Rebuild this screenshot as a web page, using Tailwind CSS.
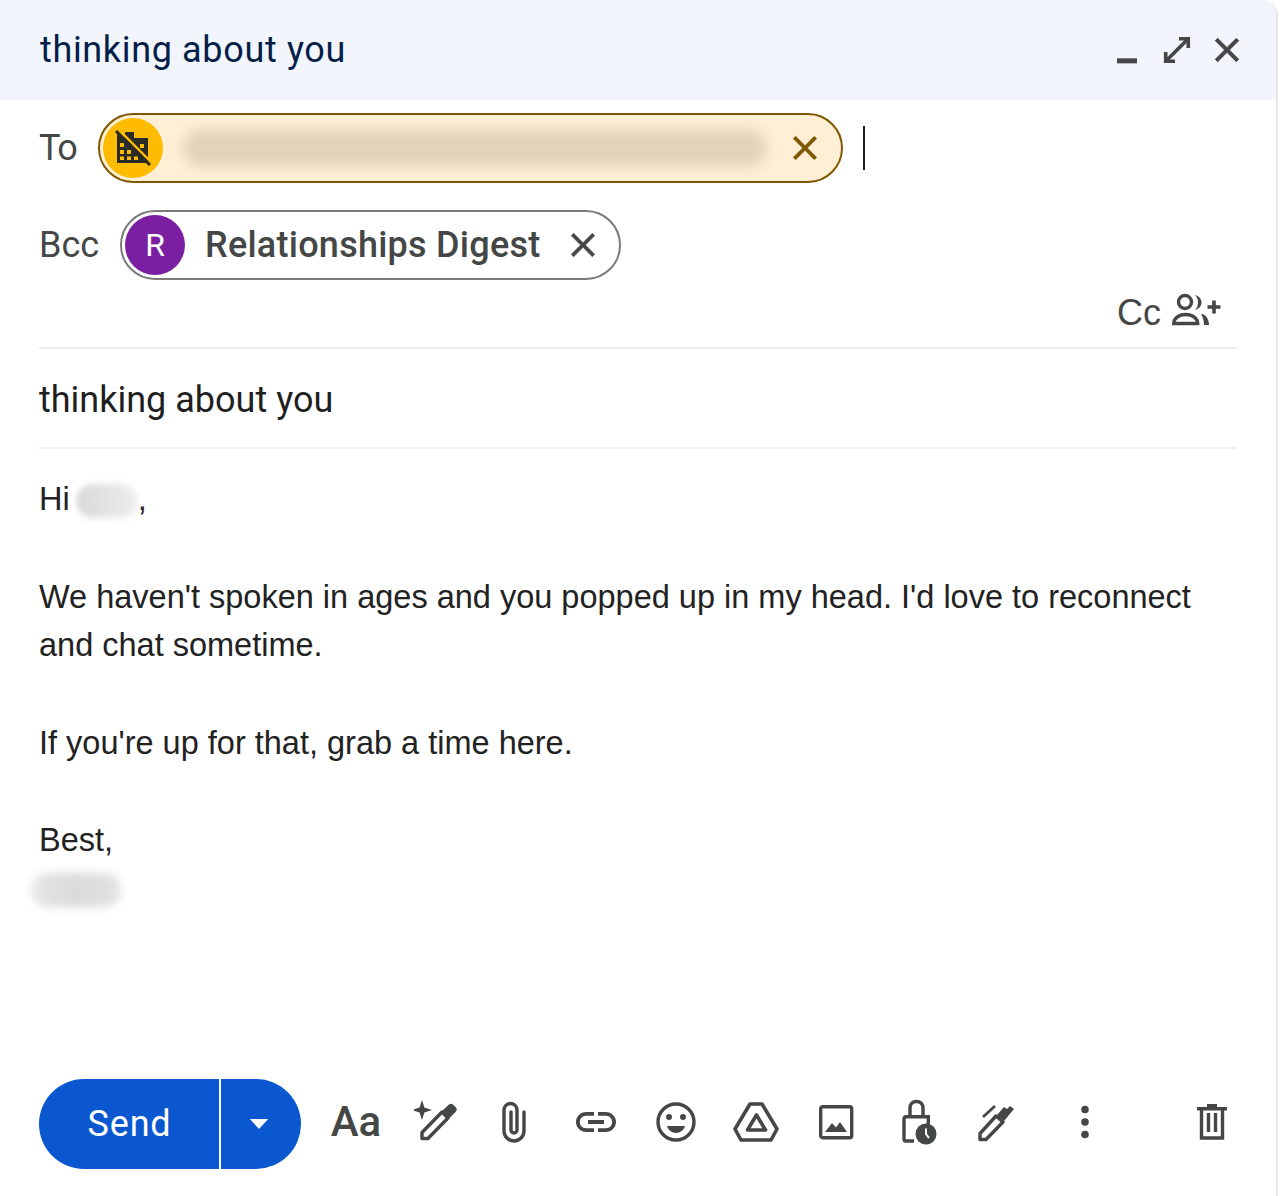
<!DOCTYPE html>
<html lang="en">
<head>
<meta charset="UTF-8">
<title>Compose - thinking about you</title>
<script src="https://cdn.jsdelivr.net/npm/@tailwindcss/browser@4"></script>
</head>
<body class="bg-white">
<div class="h-[1196px] w-[1278px] flex flex-col border-r-2 border-[#e8e8e8] overflow-hidden font-['Roboto',sans-serif] rounded-tr-[16px]">
  <!-- Title bar -->
  <header class="h-[100px] shrink-0 bg-[#f2f6fc] flex items-center pl-[40px] pr-[29px]">
    <h1 class="text-[36px] leading-none tracking-[0.65px] text-[#041e49] font-normal">thinking about you</h1>
    <div class="ml-auto flex items-center gap-[10px] text-[#444746]">
      <svg class="w-[40px] h-[40px]" viewBox="0 0 24 24" fill="currentColor"><rect x="6" y="17" width="12" height="3"/></svg>
      <svg class="w-[40px] h-[40px]" viewBox="0 0 40 40" fill="none" stroke="currentColor" stroke-width="3.6"><path d="M22 8.700h9.300V18M31 9L9 31M8.700 22v9.300H18"/></svg>
      <svg class="w-[40px] h-[40px]" viewBox="0 0 24 24" fill="currentColor" stroke="currentColor" stroke-width=".6"><path d="M19 6.410L17.590 5 12 10.590 6.410 5 5 6.410 10.590 12 5 17.590 6.410 19 12 13.410 17.590 19 19 17.590 13.410 12z"/></svg>
    </div>
  </header>

  <div class="pl-[39px] pr-[39px] flex flex-col flex-1 min-h-0">
    <!-- To -->
    <div class="flex items-center h-[70px] mt-[13px]">
      <span class="text-[36px] text-[#444746] w-[59px] leading-none tracking-[-1.5px]">To</span>
      <div class="w-[745px] h-[70px] rounded-full border-2 border-[#7f5700] bg-[#ffefd5] flex items-center pl-[3px] pr-[16px] overflow-hidden">
        <div class="w-[60px] h-[60px] rounded-full bg-[#ffbb00] flex items-center justify-center shrink-0">
          <svg class="w-[36px] h-[36px]" viewBox="0 0 36 36"><path d="M2 4v29h31V8H19V2h-9v6z" fill="#2b2b26"/><path d="M5 13h4v4H5zM5 20h4v4H5zM5 26.500h4v3.500H5zM12 20h4v4h-4zM12 26.500h4v3.500h-4zM19 26.500h4v3.500h-4zM25 14h4v4h-4z" fill="#ffbb00"/><path d="M3 -1L37 33" stroke="#ffbb00" stroke-width="2.500"/><path d="M1 1l34 34" stroke="#2b2b26" stroke-width="3"/></svg>
        </div>
        <div class="ml-[20px] w-[584px] h-[38px] rounded-full bg-[#e3d3b9] blur-[6px]"></div>
        <svg class="ml-auto w-[40px] h-[40px] shrink-0" viewBox="0 0 24 24" fill="#7f5700" stroke="#7f5700" stroke-width=".4"><path d="M19 6.410L17.590 5 12 10.590 6.410 5 5 6.410 10.590 12 5 17.590 6.410 19 12 13.410 17.590 19 19 17.590 13.410 12z"/></svg>
      </div>
      <div class="ml-[20px] w-[2px] h-[44px] bg-[#1f1f1f]"></div>
    </div>
    <!-- Bcc -->
    <div class="flex items-center h-[70px] mt-[27px]">
      <span class="text-[36px] text-[#444746] w-[81px] leading-none">Bcc</span>
      <div class="w-[501px] h-[70px] rounded-full border-2 border-[#7b7b7b] flex items-center pl-[3px] pr-[16px]">
        <div class="w-[60px] h-[60px] rounded-full bg-[#7b1fa2] text-white text-[32px] flex items-center justify-center shrink-0">R</div>
        <span class="ml-[20px] text-[36px] leading-none font-medium tracking-[0.25px] text-[#444746]">Relationships Digest</span>
        <svg class="ml-auto w-[40px] h-[40px] shrink-0" viewBox="0 0 24 24" fill="#444746" stroke="#444746" stroke-width=".4"><path d="M19 6.410L17.590 5 12 10.590 6.410 5 5 6.410 10.590 12 5 17.590 6.410 19 12 13.410 17.590 19 19 17.590 13.410 12z"/></svg>
      </div>
    </div>
    <!-- Cc -->
    <div class="flex items-center justify-end h-[50px] mt-[8px] pr-[14px] gap-[10px] text-[#444746]">
      <span class="text-[36px] leading-none font-['Liberation_Sans',sans-serif]">Cc</span>
      <svg class="w-[52px] h-[40px]" viewBox="0 0 52 40" fill="none"><circle cx="14" cy="9" r="6.500" stroke="currentColor" stroke-width="3.400"/><path d="M24 2c4 1 6.500 4 6.500 7.500S28 16 24 17c2-2 3-4.500 3-7.500S26 4 24 2z" fill="currentColor"/><path d="M2.700 30.500c0-5 5-9 12-9s12 4 12 9z" stroke="currentColor" stroke-width="3.400"/><path d="M31 21c4 1 7 5 7 11h-5c0-4-1-8-3-11z" fill="currentColor"/><path d="M43 7.500v13M36.500 14h13" stroke="currentColor" stroke-width="3.600"/></svg>
    </div>
    <div class="h-[2px] bg-[#eeeeee] mt-[9px]"></div>
    <!-- Subject -->
    <div class="h-[98px] pt-[4px] flex items-center text-[36px] leading-none text-[#1f1f1f]">thinking about you</div>
    <div class="h-[2px] bg-[#eeeeee]"></div>
    <!-- Body -->
    <div class="mt-[26px] font-['Liberation_Sans',sans-serif] text-[32.5px] leading-[48.75px] text-[#222222]">
      <p>Hi <span class="inline-block align-middle w-[62px] h-[34px] rounded-full bg-linear-to-r from-[#d8d8d8] to-[#eeeeee] blur-[3px] -ml-[3px]"></span>,</p>
      <p class="mt-[48.75px]">We haven't spoken in ages and you popped up in my head. I'd love to reconnect<br>and chat sometime.</p>
      <p class="mt-[48.75px]">If you're up for that, grab a time here.</p>
      <p class="mt-[48.75px]">Best,</p>
      <div class="w-[90px] h-[34px] mt-[8px] -ml-[8px] rounded-full bg-linear-to-r from-[#e6e6e6] via-[#dadada] to-[#e2e2e2] blur-[4px]"></div>
    </div>
    <!-- Toolbar -->
    <footer class="mt-auto mb-[27px] flex items-center text-[#444746]">
      <div class="flex h-[90px] text-white shrink-0">
        <button class="w-[180px] h-[90px] rounded-l-full bg-[#0b57d0] text-[36px] font-normal tracking-[0.8px] pl-[1px]">Send</button>
        <button class="w-[80px] h-[90px] ml-[2px] rounded-r-full bg-[#0b57d0] flex items-center justify-center pr-[4px]">
          <svg class="w-[20px] h-[12px]" viewBox="0 0 24 14" fill="white"><path d="M1 1h22L12 13z"/></svg>
        </button>
      </div>
      <div class="ml-[15px] -mt-[4px] flex items-center">
        <span class="w-[80px] text-center text-[42px] leading-none font-medium">Aa</span>
        <div class="w-[80px] flex justify-center"><svg class="w-[44px] h-[44px]" viewBox="0 0 44 44" fill="none"><path d="M8 0l2.400 7.600L18 10l-7.600 2.400L8 20l-2.400-7.600L-2 10l7.600-2.400z" fill="currentColor"/><path d="M8 32.500L28 12l6 6-20 20.500H8z" stroke="currentColor" stroke-width="3.400" stroke-linejoin="round"/><path d="M28 11l7-6.500c1-1 3-1 4 0l3 3c1 1 1 3 0 4l-7 7z" fill="currentColor"/></svg></div>
        <div class="w-[80px] flex justify-center -ml-[2px]"><svg class="w-[26px] h-[42px]" viewBox="0 0 26 42" fill="none" stroke="currentColor" stroke-width="3.400" stroke-linecap="round"><path d="M23 11v19a10 10 0 0 1-20 0V9a6.500 6.500 0 0 1 13 0v20a3 3 0 0 1-6 0V11"/></svg></div>
        <div class="w-[80px] flex justify-center ml-[2px]"><svg class="w-[48px] h-[48px]" viewBox="0 0 24 24" fill="currentColor"><path d="M3.900 12c0-1.710 1.390-3.100 3.100-3.100h4V7H7c-2.760 0-5 2.240-5 5s2.240 5 5 5h4v-1.900H7c-1.710 0-3.100-1.390-3.100-3.100zM8 13h8v-2H8v2zm9-6h-4v1.900h4c1.710 0 3.100 1.390 3.100 3.100s-1.390 3.100-3.100 3.100h-4V17h4c2.760 0 5-2.240 5-5s-2.240-5-5-5z"/></svg></div>
        <div class="w-[80px] flex justify-center"><svg class="w-[40px] h-[40px]" viewBox="0 0 40 40" fill="none"><circle cx="20" cy="20" r="18" stroke="currentColor" stroke-width="3.400"/><circle cx="13" cy="15" r="3" fill="currentColor"/><circle cx="27" cy="15" r="3" fill="currentColor"/><path d="M11 24h18c-1 4-5 7-9 7s-8-3-9-7z" fill="currentColor"/></svg></div>
        <div class="w-[80px] flex justify-center"><svg class="w-[46px] h-[40px]" viewBox="0 0 46 40" fill="none" stroke="currentColor" stroke-width="3.600" stroke-linejoin="round"><path d="M17 2h12l15 25-6 11H8L2 27z"/><path d="M23.500 13l9 15h-18z"/></svg></div>
        <div class="w-[80px] flex justify-center"><svg class="w-[36px] h-[36px]" viewBox="0 0 36 36" fill="none"><rect x="2.700" y="2.700" width="31" height="31" rx="2" stroke="currentColor" stroke-width="3.400"/><path d="M7 28l7-9 4 4.500 4-5.500 7 10z" fill="currentColor"/></svg></div>
        <div class="w-[80px] flex justify-center pl-[6px]"><svg class="w-[38px] h-[46px]" viewBox="0 0 38 46" fill="none"><path d="M10 17V9c0-4 2.500-6.500 6.500-6.500S23 5 23 9v8" stroke="currentColor" stroke-width="3.400"/><path d="M28 17.700H6a2 2 0 0 0-2 2V40a2 2 0 0 0 2 2h8" stroke="currentColor" stroke-width="3.400"/><path d="M28.300 16v9" stroke="currentColor" stroke-width="3.400"/><circle cx="26" cy="35" r="10.500" fill="currentColor"/><path d="M26 29.500V35l3 4" stroke="white" stroke-width="2"/></svg></div>
        <div class="w-[80px] flex justify-center"><svg class="w-[38px] h-[40px]" viewBox="0 0 38 40" fill="none"><path d="M3 37.500v-6L19 14l7 6L9 37.500z" stroke="currentColor" stroke-width="3.400" stroke-linejoin="round"/><path d="M20 13l7-8 3 2 3-3 4 3-10 12z" fill="currentColor"/><path d="M6 15L18 4" stroke="currentColor" stroke-width="2.800"/></svg></div>
      </div>
      <div class="ml-[29px] -mt-[4px] w-[40px] flex justify-center"><svg class="w-[10px] h-[34px]" viewBox="0 0 10 34" fill="currentColor"><circle cx="5" cy="4.500" r="3.800"/><circle cx="5" cy="17" r="3.800"/><circle cx="5" cy="29.500" r="3.800"/></svg></div>
      <div class="ml-[92px] -mt-[4px] flex justify-center"><svg class="w-[30px] h-[36px]" viewBox="0 0 30 36" fill="none"><path d="M10 0h10v3h10v3.500H0V3h10z" fill="currentColor"/><path d="M4.500 6v28h21V6M11.500 9v19M18.500 9v19" stroke="currentColor" stroke-width="3.400"/></svg></div>
    </footer>
  </div>
</div>
</body>
</html>
